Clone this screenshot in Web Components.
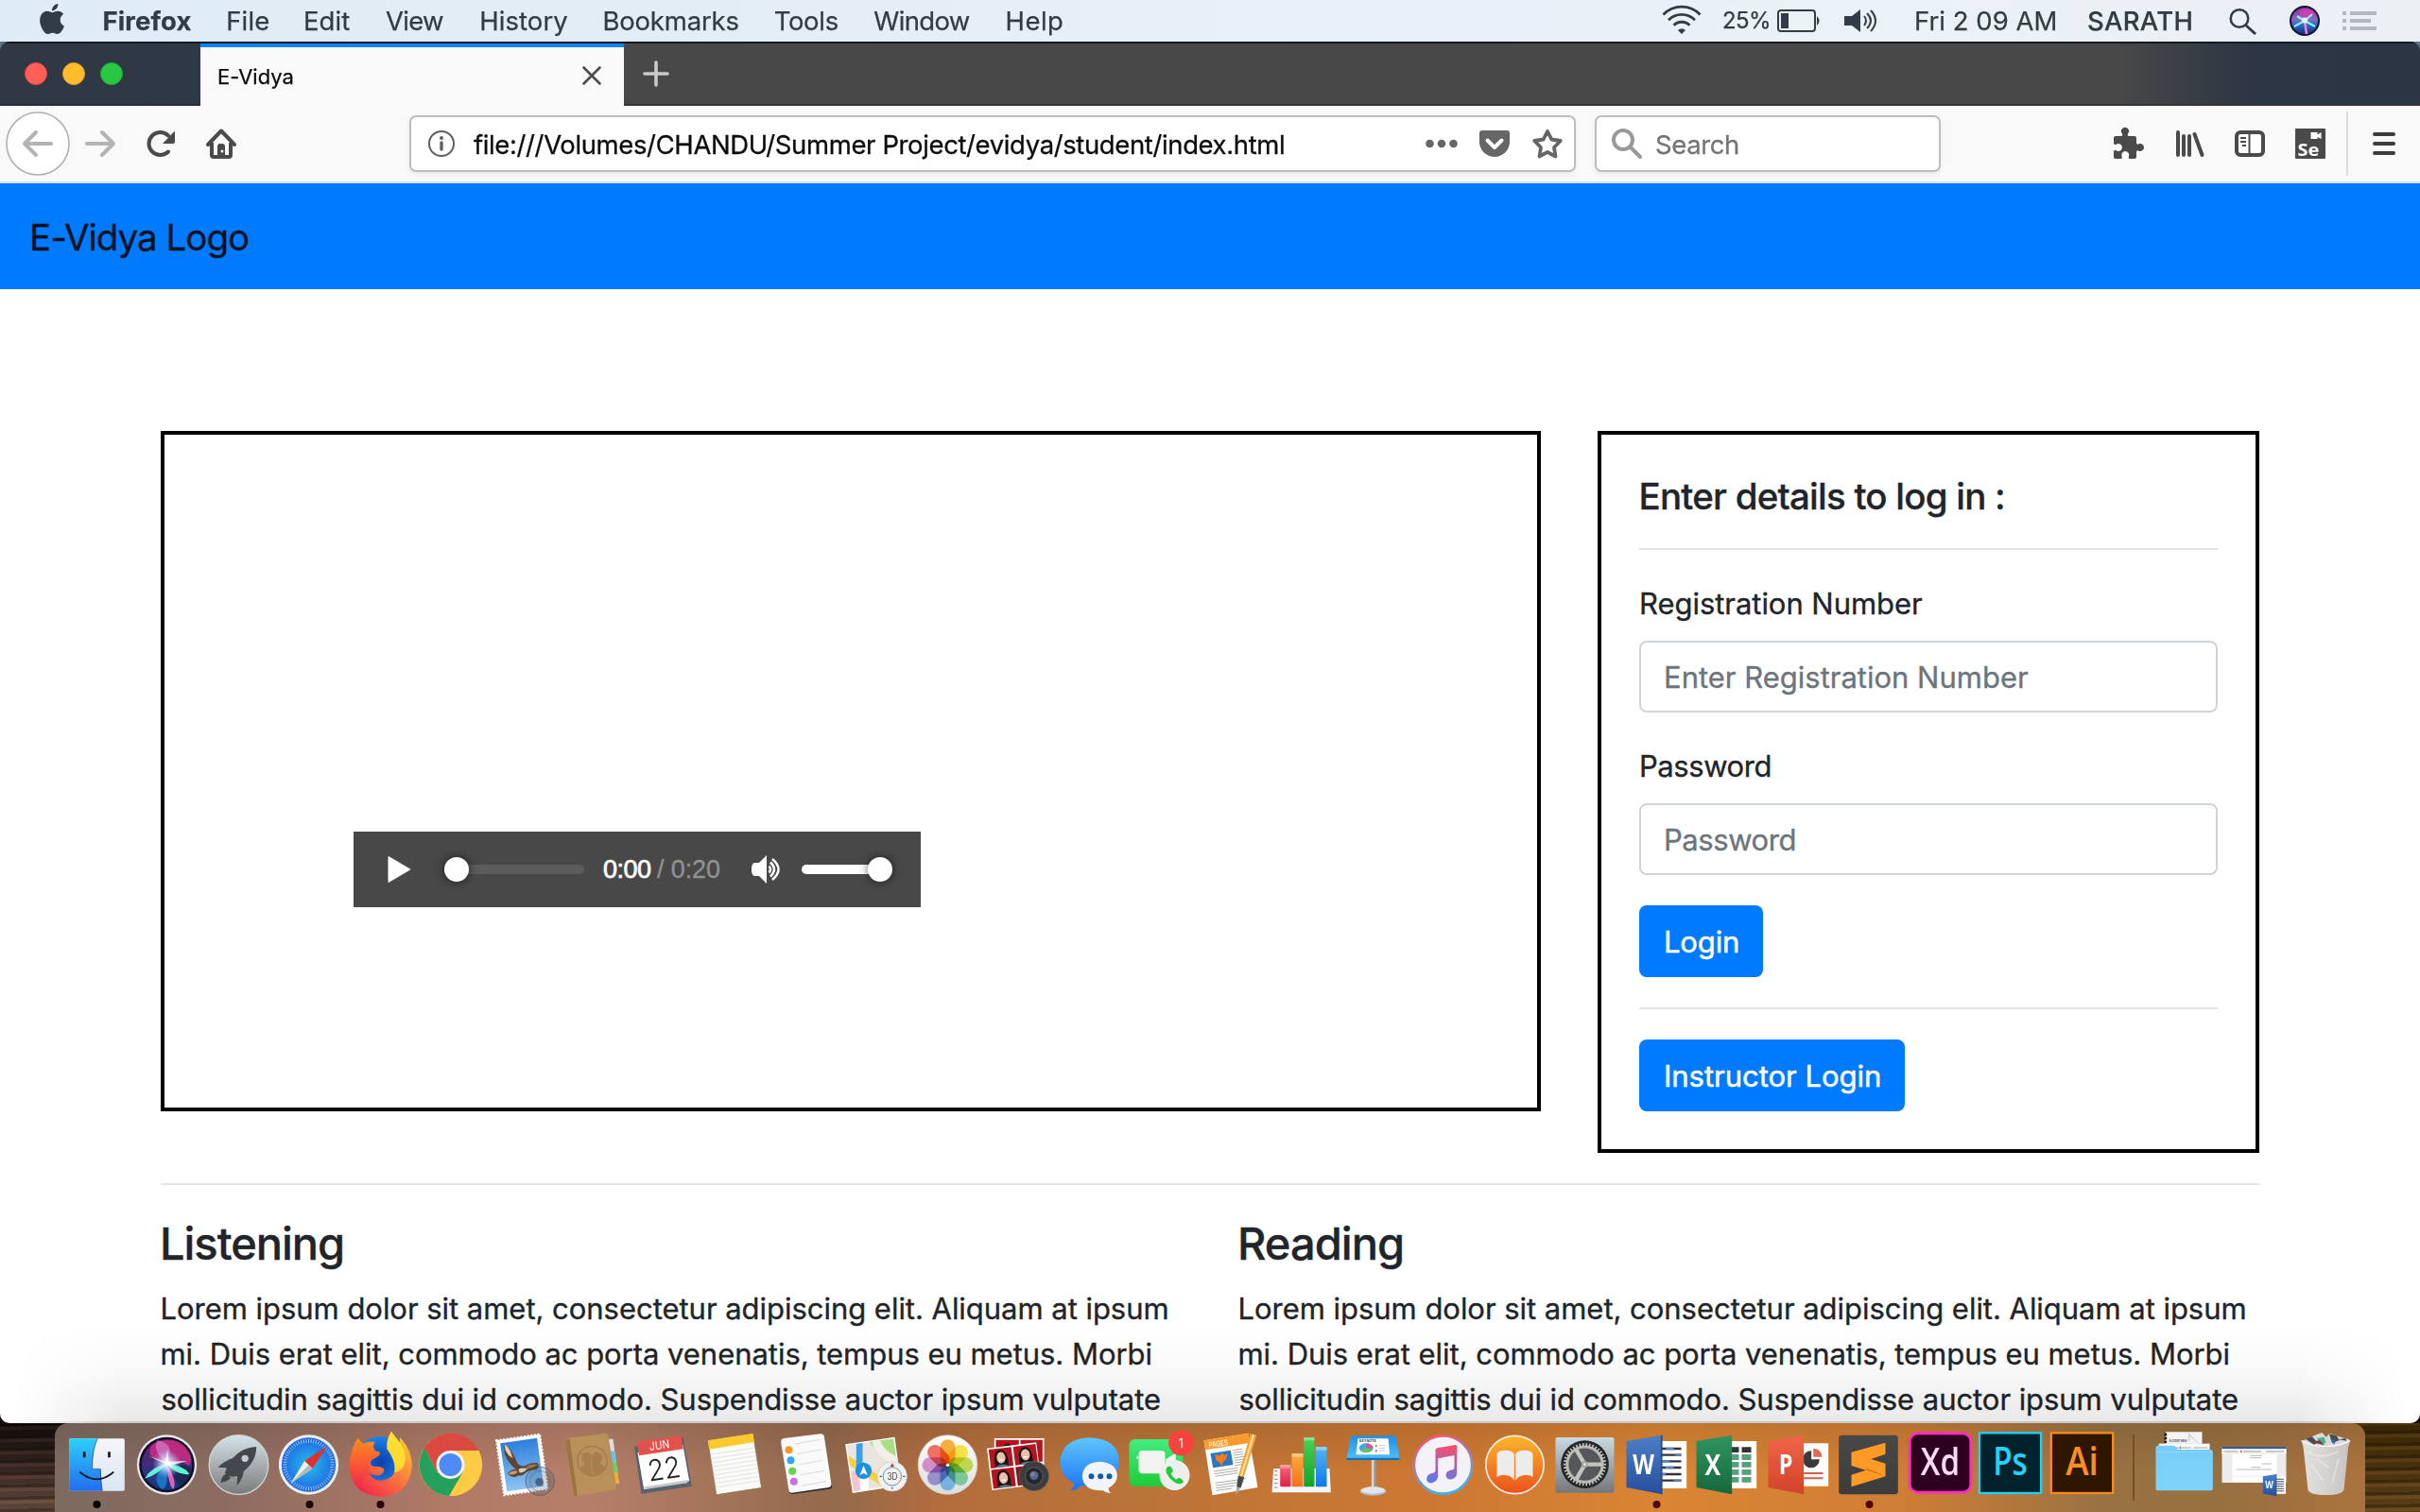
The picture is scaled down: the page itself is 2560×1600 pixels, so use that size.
<!DOCTYPE html>
<html lang="en">
<head>
<meta charset="utf-8">
<title>E-Vidya</title>
<style>
html,body{margin:0;padding:0}
body{width:2560px;height:1600px;overflow:hidden;font-family:Inter,"Liberation Sans",sans-serif;background:#5d7384}
</style>
</head>
<body>
<mac-desktop></mac-desktop>
<script>
function define(name, css, html){
  customElements.define(name, class extends HTMLElement{
    constructor(){
      super();
      const t=document.createElement('template');
      t.innerHTML='<style>*{box-sizing:border-box}svg{display:block;flex:none;overflow:visible}'+css+'</style>'+html;
      this.attachShadow({mode:'open'}).appendChild(t.content.cloneNode(true));
    }
  });
}
const icon=(x,y,w,h,body,style='')=>`<svg viewBox="${x} ${y} ${w} ${h}" width="${w}" height="${h}" style="${style}">${body}</svg>`;

/* A single line of text whose tracking is adjusted so that its ink is exactly w pixels wide. */
customElements.define('fit-text', class extends HTMLElement{
  constructor(){
    super();
    this.attachShadow({mode:'open'}).innerHTML='<style>:host{display:block;flex:none;white-space:pre}span{display:block}</style><span><slot></slot></span>';
  }
  connectedCallback(){
    const w=+this.getAttribute('w'), s=this.textContent, cs=getComputedStyle(this);
    const c=document.createElement('canvas').getContext('2d');
    c.font=`${cs.fontWeight} ${cs.fontSize} ${cs.fontFamily}`;
    const m=c.measureText(s), ink=m.actualBoundingBoxLeft+m.actualBoundingBoxRight;
    const span=this.shadowRoot.querySelector('span');
    this.style.width=w+'px';
    span.style.marginLeft=m.actualBoundingBoxLeft+'px';
    span.style.letterSpacing=((w-ink)/Math.max(1,s.length-1))+'px';
  }
});

define('mac-menubar', `
:host{display:flex;align-items:center;height:44px;padding-left:42px;color:#323c46;font-size:27.5px;line-height:44px;-webkit-text-stroke:.25px #323c46;
background:linear-gradient(90deg,#dfecf5 0,#e3edf6 700px,#e8f0f9 1300px,#ecf1f9 2100px,#eaf0f3 2560px)}
nav{display:flex;gap:38.7px;margin-left:41.5px}
.r{display:flex;align-items:center;margin-left:auto;margin-right:46px}
`, `
<svg viewBox="2.1 0 19.7 24" width="26" height="32" preserveAspectRatio="none" style="margin-top:-4px"><path fill="#323c46" d="M12.152 6.896c-.948 0-2.415-1.078-3.96-1.04-2.04.027-3.91 1.183-4.961 3.014-2.117 3.675-.546 9.103 1.519 12.09 1.013 1.454 2.208 3.09 3.792 3.039 1.52-.065 2.09-.987 3.935-.987 1.831 0 2.35.987 3.96.948 1.637-.026 2.676-1.48 3.676-2.948 1.156-1.688 1.636-3.325 1.662-3.415-.039-.013-3.182-1.221-3.22-4.857-.026-3.04 2.48-4.494 2.597-4.559-1.429-2.09-3.623-2.324-4.39-2.376-2-.156-3.675 1.09-4.61 1.09zM15.53 3.83c.843-1.012 1.4-2.427 1.245-3.83-1.207.052-2.662.805-3.532 1.818-.78.896-1.454 2.338-1.273 3.714 1.338.104 2.715-.688 3.559-1.701"/></svg>
<nav><fit-text w="93" style="font-weight:700">Firefox</fit-text><fit-text w="43">File</fit-text><fit-text w="47.5">Edit</fit-text><fit-text w="61" style="margin-left:-1px">View</fit-text><fit-text w="91" style="margin-left:1.500px">History</fit-text><fit-text w="142" style="margin-left:.5px">Bookmarks</fit-text><fit-text w="67" style="margin-left:-.5px">Tools</fit-text><fit-text w="101.5" style="margin-left:-1px">Window</fit-text><fit-text w="58.5" style="margin-left:1px">Help</fit-text></nav>
<div class="r">
${icon(1759,0,40,44,'<g fill="none" stroke="#323c46" stroke-width="2.8"><path d="M1759.5 15.5A27 27 0 0 1 1798.5 15.5M1765 21.3A19.5 19.5 0 0 1 1793 21.3M1770.5 26.8A12 12 0 0 1 1787.5 26.8"/></g><path d="M1779 36l-4-4a5.500 5.500 0 0 1 8 0z" fill="#323c46"/>')}
<fit-text w="48" style="font-size:24px;margin:-1px 9px 0 24px">25%</fit-text>
${icon(1880,0,46,44,'<rect x="1881" y="11" width="39" height="22" rx="3" fill="none" stroke="#323c46" stroke-width="2"/><rect x="1884" y="14" width="8" height="16" fill="#323c46"/><path d="M1922 17q5 5 0 10z" fill="#323c46"/>')}
${icon(1951,0,34,44,'<path d="M1951 17h8l9-7v24l-9-7h-8z" fill="#323c46"/><path d="M1972 17q4 5 0 10M1975 14q8 8 0 16M1979 11q10 11 0 22" fill="none" stroke="#323c46" stroke-width="2"/>','margin-left:25px')}
<fit-text w="147.500" style="margin-left:42px">Fri 2 09 AM</fit-text>
<fit-text w="109.500" style="margin-left:34.500px;margin-right:.5px;font-weight:500">SARATH</fit-text>
${icon(2359,0,28,44,'<circle cx="2369" cy="19.500" r="9.300" fill="none" stroke="#323c46" stroke-width="2.500"/><path d="M2375.500 26.500L2386 36" stroke="#323c46" stroke-width="3"/>','margin-left:40px')}
${icon(2422,0,32,44,'<defs><linearGradient id="sg" x2="0" y2="1"><stop offset="0" stop-color="#7d2a8c"/><stop offset=".45" stop-color="#8a6ac0"/><stop offset=".6" stop-color="#2c74c8"/><stop offset="1" stop-color="#14267a"/></linearGradient></defs><circle cx="2438" cy="22" r="15" fill="url(#sg)" stroke="#141330" stroke-width="2"/><path d="M2438 22Q2426 11 2438 9Q2450 10 2449 17Q2444 15 2438 22" fill="#d63fb0" opacity=".8"/><path d="M2438 22L2427 28M2438 22L2449 28M2438 22L2430 17M2438 22L2446 15" stroke="#8df2f4" stroke-width="2.200"/><path d="M2438 22L2440 36" stroke="#f080d8" stroke-width="2.500"/><circle cx="2438" cy="21.500" r="3" fill="#e6fbff"/>','margin-left:35px')}
${icon(2478,0,36,44,'<g fill="#b2b8bd"><path d="M2478 12h4v4h-4zM2486 12h28v4h-28zM2478 20h4v4h-4zM2486 20h22v4h-22zM2478 28h4v4h-4zM2486 28h28v4h-28z"/></g>','margin-left:24px')}
</div>`);

define('fx-tabbar', `
:host{display:flex;height:68px;border-top:2px solid #151b24;
background:linear-gradient(90deg,#303843 0,#2e3947 212px,#484848 212px,#484848 2240px,#3b3f46 2310px,#2d3643 2380px,#2b3543 2560px)}
.l{width:212px;display:flex;align-items:center;gap:16px;padding-left:26px;border-bottom:2px solid #262d38}
i{width:24px;height:24px;border-radius:50%;border:1px solid}
.tab{width:448px;background:#f9f9f9;border-top:4px solid #0a84ff;display:flex;align-items:center;padding:0 24px 0 19px;justify-content:space-between;font-size:22px;color:#0c0c0d;-webkit-text-stroke:.25px #0c0c0d}
.r{flex:1;border-bottom:2px solid #353535;display:flex;align-items:center;padding-left:20px}
`, `
<div class="l"><i style="background:#ff5f57;border-color:#e24a42"></i><i style="background:#ffbd2e;border-color:#e0a028"></i><i style="background:#28c940;border-color:#1fab2f"></i></div>
<div class="tab"><fit-text w="78.5">E-Vidya</fit-text>${icon(616,70,20,20,'<path d="M617.500 71.500l17 17M634.500 71.500l-17 17" stroke="#4c4c4d" stroke-width="2.600" stroke-linecap="round"/>','margin-top:-3px')}</div>
<div class="r">${icon(680,64,28,28,'<path d="M682 78h24M694 66v24" stroke="#cbcbcb" stroke-width="3.600" stroke-linecap="round"/>')}</div>`);

define('fx-toolbar', `
:host{display:flex;align-items:center;height:82px;background:#f9f9f9;border-bottom:2px solid #e0e0e1;padding-left:6px;font-size:27.5px}
.box{height:60px;border:2px solid #bdbdbd;border-radius:7px;background:#fff;display:flex;align-items:center;box-shadow:0 2px 5px rgba(0,0,0,.07)}
.url{width:1234px;margin-left:183px;padding-left:18px}
.search{width:366px;margin-left:20px;padding-left:16px;color:#757575}
.sep{width:2px;height:68px;background:#dcdcdc;margin:0 26px 0 22px}
`, `
${icon(6,118,68,68,'<circle cx="40" cy="152" r="33" fill="#fff" stroke="#b0b0b0" stroke-width="1.600"/><path d="M54 152H27M38 140L26 152L38 164" fill="none" stroke="#b3b3b3" stroke-width="4" stroke-linecap="round" stroke-linejoin="round"/>')}
${icon(90,136,32,32,'<path d="M92 152H119M108 140L120 152L108 164" fill="none" stroke="#b3b3b3" stroke-width="4" stroke-linecap="round" stroke-linejoin="round"/>','margin-left:16px')}
${icon(156,136,32,32,'<path d="M179 160.500A12 12 0 1 1 179 143.500" fill="none" stroke="#4a4a4b" stroke-width="4" stroke-linecap="round"/><path d="M186 138.500V150q0 2-2 2H173z" fill="#4a4a4b"/>','margin-left:33px')}
${icon(218,136,32,32,'<path d="M220 153L234 138.500L248 153" fill="none" stroke="#4a4a4b" stroke-width="4" stroke-linejoin="round" stroke-linecap="round"/><path d="M224 151V164q0 2 2 2H242q2 0 2-2V151" fill="none" stroke="#4a4a4b" stroke-width="4"/><path d="M230 166V155q0-3 3-3h2q3 0 3 3V166z" fill="#4a4a4b"/><circle cx="235" cy="160" r="1.500" fill="#f9f9f9"/>','margin-left:31px')}
<div class="box url">
${icon(453,138,28,28,'<circle cx="467" cy="152" r="13" fill="none" stroke="#5f5f60" stroke-width="2"/><path d="M467 151v7" stroke="#5f5f60" stroke-width="3.400" stroke-linecap="round"/><circle cx="467" cy="146" r="2" fill="#5f5f60"/>')}
<fit-text w="857" style="margin:2px 0 0 20px;color:#0c0c0d;-webkit-text-stroke:.3px #0c0c0d">file:///Volumes/CHANDU/Summer Project/evidya/student/index.html</fit-text>
${icon(1508,136,34,32,'<g fill="#666"><circle cx="1512.500" cy="152" r="4.300"/><circle cx="1525" cy="152" r="4.300"/><circle cx="1537.500" cy="152" r="4.300"/></g>','margin-left:150px')}
${icon(1565,136,32,32,'<path d="M1568 138H1594q3 0 3 3V150a16 16 0 0 1-32 0V141q0-3 3-3z" fill="#666"/><path d="M1573.500 148.500L1581 156L1588.500 148.500" fill="none" stroke="#fff" stroke-width="4" stroke-linecap="round" stroke-linejoin="round"/>','margin-left:23px')}
${icon(1621,136,32,32,'<path d="M1637 139L1641.300 147.500L1650.800 149L1644 156L1645.500 165.500L1637 161L1628.500 165.500L1630 156L1623.200 149L1632.700 147.500z" fill="none" stroke="#666" stroke-width="3.800" stroke-linejoin="round"/>','margin-left:24px')}
</div>
<div class="box search">
${icon(1705,136,32,32,'<circle cx="1717" cy="148" r="10" fill="none" stroke="#999" stroke-width="4"/><path d="M1724.500 155.500L1735 166" stroke="#999" stroke-width="4" stroke-linecap="round"/>')}
<fit-text w="87" style="margin:2px 0 0 15px;-webkit-text-stroke:.3px #757575">Search</fit-text>
</div>
${icon(2236,136,32,32,'<path d="M2238 144H2244.500Q2246 143 2245 141.500A4 4 0 1 1 2251 141.500Q2250 143 2251.500 144H2258Q2260 144 2260 146V151.500Q2261 153.500 2262.500 152.300A4 4 0 1 1 2262.500 159.700Q2261 158.500 2260 160.500V166Q2260 168 2258 168H2252.500Q2251 167 2252 165.500A4 4 0 1 0 2244.500 165.500Q2245.500 167 2244 168H2238Q2236 168 2236 166V160Q2237 158 2239 159.500A4 4 0 1 0 2239 152.500Q2237 154 2236 152V146Q2236 144 2238 144z" fill="#4a4a4b"/>','margin-left:183px')}
${icon(2302,136,30,32,'<path d="M2304 140V164M2310 144V164M2316 144V164M2321.500 142L2329.500 164" fill="none" stroke="#4a4a4b" stroke-width="4" stroke-linecap="round"/>','margin-left:34px')}
${icon(2364,136,32,32,'<rect x="2366" y="140" width="28" height="24" rx="4" fill="#fff" stroke="#4a4a4b" stroke-width="4"/><path d="M2379.500 140V164" stroke="#4a4a4b" stroke-width="2"/><path d="M2370 146h6M2370 150h6M2372 154h4" stroke="#4a4a4b" stroke-width="1.800"/>','margin-left:32px')}
${icon(2427,136,33,32,'<rect x="2428" y="136" width="32" height="32" rx="1" fill="#4a4a4b"/><path d="M2444.500 140h7v2.500l4-2.500v7l-4-2v2h-7z" fill="#fff"/><text x="2430.500" y="164.500" font-family="Open Sans" font-weight="700" font-size="18" fill="#fff" textLength="23" lengthAdjust="spacingAndGlyphs">Se</text>','margin-left:31px')}
<div class="sep"></div>
${icon(2510,136,24,32,'<path d="M2512 142h20M2512 152h20M2512 162h20" stroke="#3c3c3d" stroke-width="4" stroke-linecap="round"/>')}
`);

define('audio-player', `
:host{display:flex;align-items:center;width:600px;height:80px;background:#484848;padding-left:36px;font:27px "Liberation Sans",Arial,sans-serif;color:#fff}
.track{height:10px;border-radius:5px;display:flex;align-items:center;margin-left:49px;width:135px;background:#5c5c5c}
.k{width:26px;height:26px;flex:none;border-radius:50%;background:#fff;box-shadow:0 0 8px 1px rgba(0,0,0,.5);margin-left:-13px}
.vol{background:#fff;width:83px;margin-left:21px;justify-content:flex-end}
.vol .k{margin:0 -13px 0 0}
`, `
${icon(410,906,24,28,'<path d="M411 906.500L434 920L411 933.500z" fill="#fff" stroke="#fff" stroke-linejoin="round"/>')}
<div class="track"><div class="k"></div></div>
<fit-text w="49" style="margin:1px 0 0 21px;-webkit-text-stroke:.7px #fff">0:00</fit-text>
<fit-text w="66" style="margin:1px 1px 0 7px;color:#929292;-webkit-text-stroke:.3px #929292">/ 0:20</fit-text>
${icon(794,905,32,30,'<path d="M797 913h5l8-8v30l-8-8h-5q-3-1-3-7t3-7z" fill="#fff"/><path d="M812.500 916.500q3 3.500 0 7M814 912.500q8 7.500 0 15M816 909q13 11 0 22" fill="none" stroke="#fff" stroke-width="2.500"/>','margin-left:33px')}
<div class="track vol"><div class="k"></div></div>`);

define('form-field', `
:host{display:block;margin-bottom:32px;font-size:31px;line-height:48px}
.c{height:76px;margin-top:16px;border:2px solid #ced4da;border-radius:8px;padding:13px 0 0 26px;color:#6c757d;-webkit-text-stroke:.35px #6c757d}
.lb{padding:1px 0 0 2px;height:48px;-webkit-text-stroke:.35px #212529}
`, `<div class="lb"><slot name="label"></slot></div><div class="c"><slot></slot></div>`);

define('bs-button', `
:host{display:flex;align-items:center;width:max-content;height:76px;border-radius:8px;background:#007bff;color:#fff;font-size:31px;line-height:48px;padding:2px 27px 0 28px;box-sizing:border-box;-webkit-text-stroke:.5px #fff}
`, `<slot></slot>`);

define('login-card', `
:host{display:block;width:700px;height:764px;border:4px solid #000;padding:40px;box-sizing:border-box}
h5{margin:0;font-size:38.5px;line-height:48px;font-weight:500;padding:1px 0 0 2.5px;height:48px;-webkit-text-stroke:.3px #212529}
hr{margin:32px 0;border:0;height:2px;background:#e5e5e5}
`, `<h5><fit-text w="382.5">Enter details to log in :</fit-text></h5><hr>
<form-field><fit-text slot="label" w="297">Registration Number</fit-text><fit-text w="383">Enter Registration Number</fit-text></form-field>
<form-field><fit-text slot="label" w="136.5">Password</fit-text><fit-text w="136.5">Password</fit-text></form-field>
<bs-button><fit-text w="76">Login</fit-text></bs-button><hr>
<bs-button><fit-text w="226">Instructor Login</fit-text></bs-button>`);

define('text-column', `
:host{display:block;box-sizing:border-box;width:1080px;font-size:31px;line-height:48px;padding-left:1.5px;-webkit-text-stroke:.35px #212529}
.h{font-size:47px;font-weight:500;line-height:58px;height:59px;padding:1px 0 0 .5px;margin-bottom:16px}
`, `<div class="h"><slot></slot></div>
<fit-text w="1063">Lorem ipsum dolor sit amet, consectetur adipiscing elit. Aliquam at ipsum</fit-text>
<fit-text w="1046">mi. Duis erat elit, commodo ac porta venenatis, tempus eu metus. Morbi</fit-text>
<fit-text w="1055.5">sollicitudin sagittis dui id commodo. Suspendisse auctor ipsum vulputate</fit-text>`);

define('evidya-page', `
:host{display:block;position:relative;height:1312px;background:#fff;overflow:hidden;color:#212529}
header{height:112px;background:#007bff;padding:1px 0 0 34px;font-size:38.5px;line-height:112px;color:#041322;-webkit-text-stroke:.3px #041322}
main{padding:150px 170px 0}
.row{display:flex;justify-content:space-between}
.video{width:1460px;height:720px;border:4px solid #000;padding:420px 0 0 200px}
hr{margin:32px 0;border:0;height:2px;background:#e5e5e5}
.cols{display:flex;gap:60px}
.fade{position:absolute;left:0;right:0;bottom:0;height:100px;background:linear-gradient(rgba(0,0,0,0),rgba(0,0,0,.025) 45%,rgba(0,0,0,.085) 98%,rgba(0,0,0,.22) 98.500%);
-webkit-mask-image:linear-gradient(90deg,transparent 15px,#000 130px,#000 2430px,transparent 2545px)}
`, `<header><fit-text w="229">E-Vidya Logo</fit-text></header>
<main><div class="row"><div class="video"><audio-player></audio-player></div><login-card></login-card></div><hr>
<div class="cols"><text-column><fit-text w="190">Listening</fit-text></text-column><text-column><fit-text w="171">Reading</fit-text></text-column></div></main>
<div class="fade"></div>`);

/* Dock artwork is drawn at three units per pixel; ox is the artwork's horizontal origin. */
let slot=0;
const app=(ox,body,running)=>{const x=3*(64.5+75*slot-ox);slot++;
  return `<svg viewBox="${x} 48 225 282" width="75" height="94">${body}${running?`<circle cx="${x+112.5}" cy="306" r="12" fill="${running}"/>`:''}</svg>`;};
const T=(x,y,s,w,t,fill,extra='')=>`<text x="${x}" y="${y}" font-size="${s}" textLength="${w}" lengthAdjust="spacingAndGlyphs" fill="${fill}" ${extra}>${t}</text>`;
const lg=(id,a,b,o='x2="0" y2="1"')=>`<linearGradient id="${id}" ${o}><stop offset="0" stop-color="${a}"/><stop offset="1" stop-color="${b}"/></linearGradient>`;
const rays=(cx,cy,r1,r2,n,c,w)=>{let d='';for(let i=0;i<n;i++){const a=i*2*Math.PI/n;d+=`M${(cx+r1*Math.cos(a)).toFixed(1)} ${(cy+r1*Math.sin(a)).toFixed(1)}L${(cx+r2*Math.cos(a)).toFixed(1)} ${(cy+r2*Math.sin(a)).toFixed(1)}`;}return `<path d="${d}" stroke="${c}" stroke-width="${w}" fill="none"/>`;};
const face=(x,y)=>`<rect x="${x-35}" y="${y-29}" width="72" height="60" fill="#b3141f"/><path d="M${x-20} ${y+28}Q${x-24} ${y-24} ${x} ${y-24}Q${x+26} ${y-22} ${x+22} ${y+28}z" fill="#1c1414"/><ellipse cx="${x+1}" cy="${y+1}" rx="14" ry="18" fill="#e9c0a8"/><path d="M${x-24} ${y+31}Q${x+2} ${y+14} ${x+26} ${y+31}z" fill="#5a7683"/><path d="M${x-6} ${y+8}h14" stroke="#fff" stroke-width="4"/>`;
const word=`<path d="M590 105H671V255H590z" fill="#fff"/><path d="M592 129h62M592 149h62M592 169h62M592 189h62M592 210h62M592 230h62" stroke="#333" stroke-width="7"/><path d="M605 129h25M634 149h20M592 169h26M604 189h26M592 210h12M630 230h24" stroke="#5b82c4" stroke-width="7"/><path d="M480 105L593 86V274L480 252z" fill="url(#wd)"/><path d="M589 87l5-1V274l-5-1z" fill="#234a8c"/>`+T(500,209,84,68,'W','#fff','font-family="Open Sans" font-weight="700"');
const petals=['#f7a21b','#f5de27','#b5d334','#6cc08b','#62a8df','#8d7fc4','#cc7fc0','#f0584a'].map((c,i)=>`<rect x="1422" y="100" width="48" height="80" rx="24" fill="${c}" opacity=".85" transform="rotate(${i*45} 1446 181)" style="mix-blend-mode:multiply"/>`).join('');
const apps=[
app(0,`<defs>${lg('fa','#2bd0fb','#246cf0')}${lg('fb','#f6f6f8','#dae6f3')}</defs><rect x="218" y="97" width="176" height="166" rx="5" fill="url(#fb)"/><path d="M308 97H223q-5 0-5 5V258q0 5 5 5H323Q319 232 318 194H291Q291 130 308 97z" fill="url(#fa)"/><path d="M308 97Q291 130 291 193H317Q318 232 323 263" fill="none" stroke="#14345c" stroke-width="2"/><path d="M253 204Q306 248 358 204" fill="none" stroke="#10151e" stroke-width="5" stroke-linecap="round"/><path d="M266 139v18M345 139v18" stroke="#10151e" stroke-width="8"/>`,'#000'),
app(0,`<defs>${lg('si','#6b1f6e','#123a86')}<radialGradient id="sj"><stop offset="0" stop-color="#fff"/><stop offset=".35" stop-color="#dff2ff" stop-opacity=".75"/><stop offset="1" stop-color="#9fc4ff" stop-opacity="0"/></radialGradient></defs><circle cx="528" cy="180" r="95" fill="#e8e6ea"/><circle cx="528" cy="180" r="88" fill="#130f25"/><circle cx="528" cy="180" r="80" fill="url(#si)"/><path d="M528 178Q455 160 480 118Q540 82 585 122Q618 160 598 182Q560 160 528 178z" fill="#d22d83" opacity=".8"/><path d="M528 178Q480 135 498 102Q560 115 528 178z" fill="#d9a0e8" opacity=".5"/><path d="M528 178Q590 180 604 190Q600 240 566 246Q545 210 528 178z" fill="#142744" opacity=".8"/><path d="M528 178Q480 185 458 224Q495 215 528 178zM528 178Q580 180 600 210Q560 215 528 178z" fill="#5ff3d6"/><path d="M528 182Q470 220 512 257Q534 255 528 182z" fill="#1683d0" opacity=".8"/><path d="M526 178Q560 225 550 256Q538 262 526 178z" fill="#e65fb5"/><circle cx="528" cy="177" r="46" fill="url(#sj)"/><path d="M528 178L470 152L524 170L530 130L534 170L592 168L536 184z" fill="#fff" opacity=".8"/>`),
app(0,`<defs>${lg('lp','#d5e3ea','#7b7b79')}</defs><circle cx="756" cy="180" r="94" fill="url(#lp)" stroke="#cfd4d5" stroke-width="4"/><path d="M812 123Q770 124 738 158Q710 168 690 188L718 190L712 206L733 218L752 216L750 246Q770 225 772 200Q812 170 812 123zM722 206Q702 210 699 237Q724 232 730 222z" fill="#44484a"/><circle cx="776" cy="160" r="11" fill="#c2cccf"/>`),
app(0,`<defs><radialGradient id="sa"><stop offset="0" stop-color="#26bfeb"/><stop offset="1" stop-color="#1f67e2"/></radialGradient></defs><circle cx="978" cy="180" r="95" fill="#eceef0"/><circle cx="978" cy="180" r="86" fill="url(#sa)"/>${rays(978,180,70,82,60,'#d6ebfa',2)}<path d="M1038 120L965 168L990 192z" fill="#e02f2f"/><path d="M921 239L965 168L990 192z" fill="#f0f1f3"/><path d="M921 239L978 181L990 192z" fill="#b4b8bd"/>`,'#1c0200'),
app(0,`<defs>${lg('ff','#ffde2e','#f4214b','x1="1" x2=".2" y2="1"')}${lg('fg','#ff8d1c','#f02050')}<radialGradient id="fe"><stop offset="0" stop-color="#0b3fae"/><stop offset="1" stop-color="#1a83e8"/></radialGradient></defs><circle cx="1206" cy="172" r="82" fill="url(#fe)"/><path d="M1134 95Q1136 112 1150 114Q1170 104 1188 108Q1178 122 1188 136Q1206 138 1204 146Q1196 158 1180 162Q1166 180 1186 186Q1205 184 1216 192Q1222 203 1204 213Q1185 216 1170 208Q1184 232 1210 230Q1262 222 1250 170Q1238 145 1226 130Q1226 100 1240 74Q1255 96 1268 110Q1266 98 1268 94Q1306 132 1306 184Q1298 278 1206 282Q1112 276 1107 184Q1108 140 1134 95z" fill="url(#ff)"/><path d="M1134 95Q1108 140 1107 184Q1112 240 1150 266Q1140 210 1172 212Q1164 180 1180 162Q1204 152 1204 144L1188 136Q1178 120 1188 108Q1166 106 1150 114z" fill="url(#fg)"/><path d="M1240 74Q1222 104 1228 130Q1256 170 1250 205Q1280 200 1284 168Q1290 140 1264 106z" fill="#ffe632" opacity=".85"/>`,'#2a0000'),
app(0,`<circle cx="1428" cy="180" r="99" fill="#fdca43"/><path d="M1428 180L1342 131A99 99 0 0 1 1514 135L1428 135z" fill="#db4437"/><path d="M1346 126A99 99 0 0 1 1518 135H1428L1385 205z" fill="#db4a40"/><path d="M1346 126A99 99 0 0 0 1424 279L1468 204L1385 205z" fill="#24a05c"/><path d="M1518 135H1428L1468 204L1424 279A99 99 0 0 0 1518 135z" fill="#fecb45"/><circle cx="1428" cy="180" r="45" fill="#f4f4f4"/><circle cx="1428" cy="180" r="36" fill="#4d8af5"/>`),
app(520,`<defs>${lg('ml','#2d7fdd','#8dc4f2')}</defs><g transform="rotate(-8 95 180)"><rect x="25" y="92" width="140" height="176" fill="#fff" stroke="#fff" stroke-width="6" stroke-dasharray="6 5"/><rect x="36" y="103" width="118" height="154" fill="url(#ml)"/></g><path d="M40 114Q54 120 62 138Q74 158 82 178Q92 186 104 184Q120 172 144 174Q154 184 142 196Q120 196 106 206Q98 216 84 214Q66 226 48 208Q58 194 76 194Q52 176 40 146Q36 128 40 114z" fill="#5e4433"/><path d="M40 114Q52 122 58 136L66 160Q50 150 42 134zM84 194Q96 188 112 192Q104 204 88 206z" fill="#d8cdbb"/><path d="M108 186Q124 176 146 180Q130 190 110 194z" fill="#9a7450"/><path d="M50 208Q64 196 82 200Q72 218 50 208z" fill="#c49a6b"/><circle cx="152" cy="232" r="46" fill="#415a75" fill-opacity=".25" stroke="#444c5a" stroke-opacity=".5" stroke-width="3"/><circle cx="152" cy="232" r="32" fill="none" stroke="#444c5a" stroke-opacity=".5" stroke-width="2"/><circle cx="150" cy="235" r="13" fill="#35506e" opacity=".75"/>`),
app(520,`<path d="M368 98L384 98L403 238L390 242z" fill="#ddd"/><path d="M376 137l12-1 5 34-12 2z" fill="#5ac7ef"/><path d="M381 172l13-1 4 35-13 1z" fill="#65d36a"/><path d="M386 207l13-1 4 33-12 2z" fill="#f5b11e"/><path d="M233 101Q233 96 240 95L358 80Q367 79 369 87L394 246Q396 256 384 260L264 280Q258 281 257 274z" fill="#b98f5a"/><path d="M233 101L246 97L271 278L260 280z" fill="#9a7542"/><circle cx="318" cy="168" r="47" fill="none" stroke="#a37c4a" stroke-width="4"/><path d="M279 196Q282 184 298 178Q282 168 285 152Q290 139 302 140Q314 142 317 154Q322 138 336 140Q350 144 350 160Q350 170 342 176Q354 182 358 190Q342 214 318 214Q294 214 279 196z" fill="#a67f4c"/><path d="M317 154Q312 190 322 213" stroke="#b98f5a" stroke-width="3" fill="none"/>`),
app(520,`<path d="M452 122L606 94L634 248L474 272z" fill="#56626d"/><path d="M462 142L606 118L626 232L482 258z" fill="#fff"/><path d="M459 107L600 88L607 130L467 151z" fill="#e4504c"/><path d="M482 250Q550 240 622 228L620 238L486 258z" fill="#c9c9c9"/><g transform="rotate(-8 540 180)">${T(508,130,36,64,'JUN','#fff')}${T(492,226,92,104,'22','#222','font-weight="300"')}</g>`),
app(520,`<path d="M685 103L828 81L855 253L712 275z" fill="#fbfbf8" stroke="#8b713e" stroke-width="2"/><path d="M685 103L828 81L832 108L689 131z" fill="#fbc92b"/><path d="M692 148l143-22M694 161l143-22M696 174l143-22M698 187l143-22M700 200l143-22M702 213l143-22M704 226l143-22M706 239l143-22M708 252l143-22" stroke="#d4d4d4" stroke-width="2"/>`),
app(520,`<path d="M918 106L944 268Q946 274 954 273L1070 257Q1080 255 1079 246L1074 220z" fill="#252c2e"/><path d="M917 110Q916 98 926 96L1042 82Q1052 81 1054 90L1077 240Q1078 250 1068 252L952 269Q943 270 942 262z" fill="#fafafa"/><path d="M962 114l78-14M967 146l78-14M972 180l78-14M977 213l78-14M982 247l78-14" stroke="#c9c9c9" stroke-width="2"/><circle cx="942" cy="133" r="12" fill="#ff9325"/><circle cx="948" cy="166" r="12" fill="#27a9f7"/><circle cx="953" cy="200" r="12" fill="#63d640"/><circle cx="958" cy="233" r="12" fill="#c771e0"/>`),
app(520,`<defs><clipPath id="mp"><path d="M1126 118L1274 97L1294 241L1148 265z"/></clipPath></defs><path d="M1121 115L1278 92L1299 246L1144 270z" fill="#fff"/><g clip-path="url(#mp)"><rect x="1120" y="90" width="180" height="180" fill="#e9e5de"/><path d="M1185 90H1290V170Q1230 160 1185 90z" fill="#a8df83"/><path d="M1215 88Q1225 150 1290 168" fill="none" stroke="#f2efe9" stroke-width="26"/><path d="M1120 205L1160 200L1170 270H1130z" fill="#f8c3cf"/><path d="M1120 145L1245 225L1240 250L1120 172z" fill="#fbcf3c"/><path d="M1166 100V200" stroke="#37a0ea" stroke-width="20"/><path d="M1182 220V270" stroke="#fff" stroke-width="26"/></g><circle cx="1179" cy="199" r="26" fill="#1c8fe2"/><path d="M1179 182L1192 214L1179 206L1167 214z" fill="#fff"/><circle cx="1270" cy="217" r="47" fill="#f1f1ef" stroke="#cbcbc8" stroke-width="2"/><circle cx="1270" cy="217" r="29" fill="none" stroke="#6794aa" stroke-width="3"/>${T(1254,228,30,33,'3D','#444')}<path d="M1270 175l6 11h-12z" fill="#d22"/><path d="M1230 217h7M1304 217h7M1270 251v6" stroke="#333" stroke-width="3"/>`),
app(520,`<defs>${lg('ph','#fff','#dbdcdd')}</defs><circle cx="1446" cy="180" r="94" fill="url(#ph)" stroke="#d4d4d4" stroke-width="2"/><g style="isolation:isolate">${petals}</g><circle cx="1446" cy="181" r="5" fill="#fff"/>`),
app(1040,`<path d="M34 96H192V190H34z" fill="#fff"/><path d="M39 101H112V170H39zM117 101H187V170H117z" fill="#b3141f"/><path d="M60 125Q75 100 92 125z" fill="#221"/><g transform="rotate(-7 95 185)"><rect x="18" y="118" width="158" height="134" fill="#fff"/>${face(58,152)}${face(136,152)}${face(58,217)}<rect x="101" y="188" width="72" height="60" fill="#8b1620"/></g><circle cx="160" cy="216" r="47" fill="#3c3c3c" stroke="#666" stroke-width="2"/><circle cx="160" cy="216" r="28" fill="#26272b" stroke="#555" stroke-width="4"/><circle cx="160" cy="214" r="14" fill="#51689c"/><circle cx="156" cy="210" r="7" fill="#93798f"/>`),
app(1040,`<defs>${lg('mg','#5fc6fb','#1a72f8')}</defs><path d="M336 94Q430 98 430 172Q428 246 336 248Q316 248 310 246Q294 262 274 262Q290 250 286 238Q242 214 243 170Q248 98 336 94z" fill="url(#mg)"/><path d="M369 170Q424 174 424 216Q422 242 396 254Q396 264 405 270Q388 270 380 262Q316 264 313 216Q316 172 369 170z" fill="#f1f5f9"/><g fill="#1459a8"><circle cx="342" cy="217" r="9"/><circle cx="371" cy="217" r="9"/><circle cx="399" cy="217" r="9"/></g>`),
app(1040,`<defs>${lg('ft','#41ee7e','#1fcb38')}</defs><rect x="462" y="99" width="170" height="150" rx="18" fill="url(#ft)"/><rect x="492" y="135" width="84" height="73" rx="12" fill="#f3f3f1"/><path d="M578 163L606 145Q610 144 610 150V195L578 180z" fill="#f3f3f1"/><path d="M486 153h4v9h-4z" fill="#fff"/><circle cx="606" cy="213" r="48" fill="#eeefed"/><path d="M585 186q7-5 12 4l4 9q1 5-7 9q6 13 18 19q6-8 11-5l8 6q6 6-2 11q-12 6-30-9q-22-20-20-36q2-5 6-8z" fill="#21c93c"/><circle cx="627" cy="111" r="40" fill="#f9423b"/>${T(618,126,40,16,'1','#fff')}`),
app(1040,`<path d="M699 103L840 80L870 252L726 277z" fill="#fff"/><path d="M699 103L840 80L846 110L704 133z" fill="#fb9a2c"/><path d="M720 144L784 134L792 180L728 190z" fill="#2679c2"/><path d="M735 146l14 6 8-10 8 9 10-7-6 20-10 8-2 12-10-12-10-8z" fill="#f77919"/><path d="M792 134l30-4M793 142l30-4M794 150l30-4M795 158l30-4M796 166l30-4M797 174l28-4M798 182l26-4M732 201l75-11M733 209l75-11M735 217l72-11M736 238l96-14M737 246l90-13M738 254l58-8M738 262l50-7" stroke="#aaa" stroke-width="3"/><g transform="rotate(-8 745 115)">${T(714,122,25,62,'PAGES','#fff','font-weight="500"')}</g><path d="M847 81L866 87L826 220L808 216z" fill="#f1a43a"/><path d="M854 83L860 85L820 218L814 217z" fill="#ffe1a2"/><path d="M808 215L827 219L816 254L803 250z" fill="#4a4846"/><path d="M803 250L815 254L800 278z" fill="#a8a8a8"/>`),
app(1040,`<path d="M920 192H1098L1102 268H915z" fill="#f7f7f7"/><path d="M923 200h10M923 213h10M923 226h10M923 239h10M923 252h10" stroke="#888" stroke-width="3"/><defs>${lg('n1','#f16a70','#dc2147')}${lg('n2','#fbae3b','#f56f1c')}${lg('n3','#46d455','#13a32a')}${lg('n4','#4fb9f4','#1276ec')}</defs><rect x="941" y="180" width="34" height="70" rx="3" fill="url(#n1)"/><rect x="978" y="144" width="36" height="106" rx="3" fill="url(#n2)"/><rect x="1016" y="93" width="34" height="157" rx="3" fill="url(#n3)"/><rect x="1054" y="123" width="35" height="127" rx="3" fill="url(#n4)"/><g fill="#fff" opacity=".35"><rect x="941" y="180" width="34" height="11"/><rect x="978" y="144" width="36" height="11"/><rect x="1016" y="93" width="34" height="10"/><rect x="1054" y="123" width="35" height="11"/></g>`),
app(1040,`<defs>${lg('kn','#1f90e8','#4dbef6')}</defs><path d="M1231 160h13v104h-13z" fill="#cfd4d9"/><path d="M1239 160h5v104h-5z" fill="#8e959b"/><ellipse cx="1236" cy="264" rx="41" ry="14" fill="#b4c0ca"/><ellipse cx="1236" cy="261" rx="38" ry="11" fill="#dfe6ec"/><path d="M1166 88H1308L1320 160H1152z" fill="url(#kn)"/><path d="M1152 158H1320V165H1152z" fill="#1472b4"/><path d="M1188 97H1284L1289 148H1182z" fill="#fff"/>${T(1192,108,11,54,'KEYNOTE','#333','font-weight="600"')}<ellipse cx="1214" cy="127" rx="22" ry="15" fill="#45a4e8"/><path d="M1214 127L1196 136Q1212 148 1234 134z" fill="#62c554"/><path d="M1214 127V112Q1234 114 1236 128z" fill="#e3528f"/><path d="M1246 116v8M1246 132v8" stroke="#e44" stroke-width="4"/><path d="M1254 119h22M1254 127h20M1254 135h20" stroke="#ccc" stroke-width="3"/>`),
app(1040,`<defs>${lg('it','#f5556c','#3ab4f4','x1=".3" y1="0" x2=".6" y2="1"')}${lg('iu','#fb4f67','#5b78f3','x1=".5" x2=".4" y2="1"')}</defs><circle cx="1458" cy="180" r="92" fill="#f4f2f7" stroke="url(#it)" stroke-width="8"/><path d="M1434 134Q1434 128 1440 127L1496 117Q1502 116 1502 122V205Q1502 222 1486 226Q1468 228 1467 213Q1468 200 1482 197Q1494 196 1494 188V150L1442 160V216Q1440 234 1422 238Q1406 238 1406 224Q1408 210 1422 207Q1434 206 1434 198z" fill="url(#iu)"/>`),
app(1560,`<defs>${lg('ib','#fdb62c','#e9501c')}</defs><circle cx="126" cy="180" r="92" fill="url(#ib)" stroke="#f2ece6" stroke-width="5"/><path d="M69 146Q72 134 96 134Q118 134 124 146V230Q115 212 90 212Q76 212 69 220zM128 146Q134 134 156 134Q180 134 183 146V220Q176 212 162 212Q138 212 128 230z" fill="#ececec"/>`),
app(1560,`<defs>${lg('sp','#cadae1','#74777a')}</defs><rect x="255" y="93" width="186" height="176" rx="5" fill="url(#sp)"/><circle cx="348" cy="179" r="76" fill="#242627"/><circle cx="348" cy="179" r="56" fill="#54585a" stroke="#b9b9b6" stroke-width="9"/>${rays(348,179,59,68,38,'#c2c2be',5)}<path d="M348 179H402M348 179L321 133M348 179L321 226" stroke="#c4c4bf" stroke-width="13"/><circle cx="348" cy="179" r="10" fill="#a5a5a2"/><circle cx="348" cy="179" r="4" fill="#eee"/>`),
app(1560,`<defs>${lg('wd','#4e7ec7','#264f9c')}</defs>`+word,'#4a0500'),
app(1560,`<defs>${lg('xl','#2f9561','#16683c')}</defs><path d="M812 105H893V255H812z" fill="#fff"/><path d="M814 124h23v17h-23zM846 124h30v17h-30z" fill="#333"/><path d="M814 147h23v18h-23zM846 147h30v18h-30zM814 171h23v17h-23zM846 171h30v17h-30zM814 195h23v17h-23zM846 195h30v17h-30zM814 219h23v17h-23zM846 219h30v17h-30z" fill="#5a9f7c"/><path d="M702 105L815 86V274L702 252z" fill="url(#xl)"/>${T(729,214,90,50,'X','#fff','font-family="Open Sans" font-weight="700"')}`),
app(1560,`<defs>${lg('pp','#f26548','#d0432a')}</defs><path d="M1040 112H1121V248H1040z" fill="#fff"/><path d="M1067 136V163H1093A27 27 0 1 1 1067 136z" fill="#3a3a3a"/><path d="M1073 155V128Q1099 130 1101 155z" fill="#dc6b58"/><path d="M1043 207h61M1043 223h61" stroke="#dc5c47" stroke-width="6"/><path d="M930 105L1043 86V274L930 252z" fill="url(#pp)"/>${T(964,211,88,44,'P','#fff','font-family="Open Sans" font-weight="700"')}`),
app(1560,`<defs>${lg('su','#484848','#3c3c3c')}</defs><rect x="1154" y="86" width="188" height="188" rx="10" fill="url(#su)"/><path d="M1194 140L1302 110V146L1256 162L1302 176V217L1194 250V212L1240 197L1194 183z" fill="#ff9a24"/><path d="M1240 197L1302 217L1256 196L1240 190z" fill="#d67a12"/>`,'#4a0500'),
app(1560,`<rect x="1379" y="80" width="194" height="188" rx="26" fill="#2e001e" stroke="#ff2bc2" stroke-width="9"/>${T(1414,214,118,124,'Xd','#ffd9f5','font-family="Open Sans" font-weight="600"')}`),
app(2080,`<rect x="40" y="79" width="196" height="191" fill="#00222c" stroke="#1fd0f8" stroke-width="7"/>${T(83,213,124,110,'Ps','#22d3fa','font-family="Open Sans" font-weight="600"')}`),
app(2080,`<rect x="268" y="79" width="196" height="191" fill="#2f1600" stroke="#f8891c" stroke-width="7"/>${T(314,213,124,104,'Ai','#fb8e22','font-family="Open Sans" font-weight="600"')}`)
].join('');
const tail=(x,b)=>`<svg viewBox="${x} 48 225 282" width="75" height="94">${b}</svg>`;
const stack=tail(577.5,`<defs>${lg('fo','#74cdf8','#7fd3f8')}</defs><path d="M632 76H747V130H632z" fill="#f3f3f3"/><path d="M631 80v30" stroke="#111" stroke-width="8" stroke-dasharray="8 4"/>${T(642,109,9,57,'ALGORITHMS','#555','font-weight="700"')}<path d="M706 84L734 110M706 80v26" stroke="#aaa" stroke-width="2"/><path d="M610 113H771V150H610z" fill="#fafafa" stroke="#ccc"/><path d="M666 126h46M720 126h44M678 120v12" stroke="#777" stroke-width="2"/><path d="M600 124Q600 119 606 119H655Q662 119 666 126L670 132H774Q781 132 781 138V256Q781 262 775 262H606Q600 262 600 256z" fill="url(#fo)"/><path d="M600 140H781" stroke="#a5e0fb" stroke-width="2"/>`)
+tail(802.5,`<rect x="810" y="123" width="204" height="114" fill="#ececee"/><path d="M810 123h204v7h-204z" fill="#2c5aa5"/><path d="M810 130h204v15h-204z" fill="#f5f5f5"/><path d="M816 138h45M878 138h56M950 138h56" stroke="#bbb" stroke-width="4"/><circle cx="871" cy="138" r="3" fill="#e44"/><path d="M843 146H984V215H843zM843 218H984V236H843z" fill="#fff"/><path d="M901 151h36M899 158h36M936 177h32M903 188h30M856 195h112" stroke="#999" stroke-width="2"/><g transform="translate(757.6 178.200) scale(.38 .37)">${word}</g>`)
+tail(1027.5,`<defs>${lg('tr','#e4e2df','#c6c4c2','x2="1"')}</defs><path d="M1066 104L1110 84L1128 78L1140 92L1152 80L1180 90L1214 100L1200 124H1080z" fill="#d8d8d6"/><path d="M1076 98l20-8 18 20-12 6zM1150 82l24 6 8 14-22 10zM1180 100l22-4 4 8z" fill="#4b4b50"/><path d="M1112 96l22-4 6 18-18 6z" fill="#42b78e"/><path d="M1094 108l26-6 16 16z" fill="#7b3b3b"/><path d="M1154 98l18 4-6 14z" fill="#3a65a8"/><path d="M1062 103Q1100 126 1140 124Q1190 122 1217 103Q1214 116 1211 122L1197 260Q1190 276 1140 276Q1090 276 1083 260L1068 122z" fill="url(#tr)"/><path d="M1062 103Q1100 124 1140 122Q1190 120 1217 103" fill="none" stroke="#f7f7f6" stroke-width="4"/><path d="M1085 140Q1120 165 1180 138M1095 180L1130 230M1180 160L1160 240M1110 160L1150 190" stroke="#f0efed" stroke-width="5" fill="none" opacity=".6"/>`);

define('mac-dock', `
:host{display:flex;justify-content:flex-start;height:94px;padding-left:58px;box-sizing:border-box;
background:
 repeating-linear-gradient(179deg,rgba(0,0,0,.35) 0 3px,rgba(150,110,80,.1) 4px 7px,rgba(0,0,0,.15) 8px 13px),
 linear-gradient(90deg,transparent 50%,rgba(100,66,0,.6) 50%),
 linear-gradient(#140d0b,#382722 45%,#6a4e3f 90%)}
.bar{width:2444px;display:flex;padding-left:6.5px;border-radius:14px 14px 0 0;font-family:Inter,sans-serif;
background:linear-gradient(rgba(0,0,0,.1),rgba(0,0,0,0) 55%),linear-gradient(90deg,#7d6a60 0,#8d6c60 180px,#b07a66 420px,#b67f6a 560px,#936a4c 820px,#b36d3d 940px,#bb7438 1150px,#cc7832 1450px,#d98534 1700px,#cf7e35 1950px,#987243 2170px,#987040 2290px,#aa733e 2444px)}
.sep{width:33px;padding:12px 0 0 16px}
.sep i{display:block;width:2px;height:70px;background:#74501f}
`, `<div class="bar">${apps}<div class="sep"><i></i></div>${stack}</div>`);

define('browser-window', `:host{display:block;height:1462px;border-radius:10px;overflow:hidden}`,
`<fx-tabbar></fx-tabbar><fx-toolbar></fx-toolbar><evidya-page></evidya-page>`);
define('mac-desktop', `:host{display:block;width:2560px;height:1600px;background:linear-gradient(#5d7384 1400px,#120c0a 1400px)}`,
`<mac-menubar></mac-menubar><browser-window></browser-window><mac-dock></mac-dock>`);
</script>
</body>
</html>
